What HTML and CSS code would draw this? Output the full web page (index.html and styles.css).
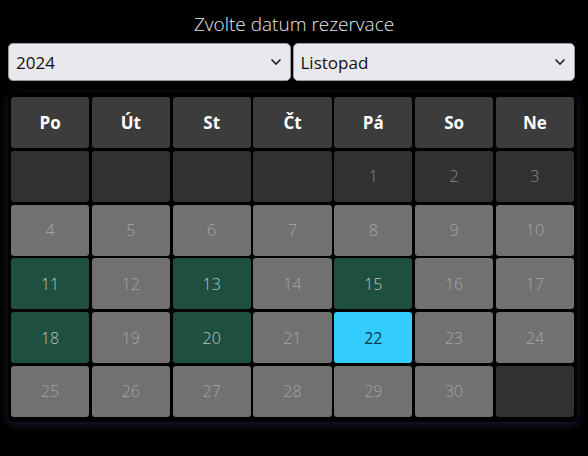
FILE: index.html
```html
<!DOCTYPE html>
<html>
  <head>
    <title>Rezervace</title>
    <link rel="stylesheet" href="styles.css">
  </head>
  <body>
    <h1 class="title">Zvolte datum rezervace</h1>
    <div class="pickers">
      <select id="year" class="picker">
        <option>2024</option>
      </select>
      <select id="month" class="picker">
        <option>Listopad</option>
      </select>
    </div>

    <div class="calendar">
      <div class="cell head">Po</div>
      <div class="cell head">Út</div>
      <div class="cell head">St</div>
      <div class="cell head">Čt</div>
      <div class="cell head">Pá</div>
      <div class="cell head">So</div>
      <div class="cell head">Ne</div>

      <div class="cell empty"></div>
      <div class="cell empty"></div>
      <div class="cell empty"></div>
      <div class="cell empty"></div>
      <div class="cell empty">1</div>
      <div class="cell empty">2</div>
      <div class="cell empty">3</div>

      <div class="cell day">4</div>
      <div class="cell day">5</div>
      <div class="cell day">6</div>
      <div class="cell day">7</div>
      <div class="cell day">8</div>
      <div class="cell day">9</div>
      <div class="cell day">10</div>

      <div class="cell day free">11</div>
      <div class="cell day">12</div>
      <div class="cell day free">13</div>
      <div class="cell day">14</div>
      <div class="cell day free">15</div>
      <div class="cell day">16</div>
      <div class="cell day">17</div>

      <div class="cell day free">18</div>
      <div class="cell day">19</div>
      <div class="cell day free">20</div>
      <div class="cell day">21</div>
      <div class="cell day selected">22</div>
      <div class="cell day">23</div>
      <div class="cell day">24</div>

      <div class="cell day">25</div>
      <div class="cell day">26</div>
      <div class="cell day">27</div>
      <div class="cell day">28</div>
      <div class="cell day">29</div>
      <div class="cell day">30</div>
      <div class="cell empty"></div>
    </div>
  </body>
</html>
```

FILE: styles.css
```css
/* Rezervace - kalendar */
body {
  font-family: "Open Sans", "Noto Sans", sans-serif;
  margin: 0;
  padding: 8px;
  background-color: #000;
  color: #e4e4e4;
}

.title {
  margin: 3px 0 6px;
  font-size: 19px;
  font-weight: 300;
  text-align: center;
  line-height: 26px;
  color: #e6e6e6;
}

.pickers {
  display: grid;
  grid-template-columns: 1fr 1fr;
  gap: 2px;
  width: 567px;
}

.picker {
  height: 38px;
  padding: 0 7px;
  font-family: "Open Sans", sans-serif;
  font-size: 17px;
  color: #111;
  background-color: #e9e8ed;
  border: 1px solid #9a99a2;
  border-radius: 5px;
  appearance: none;
  background-image: url("data:image/svg+xml;utf8,<svg xmlns='http://www.w3.org/2000/svg' width='12' height='8' viewBox='0 0 12 8'><path d='M1.5 1.5 L6 6 L10.5 1.5' fill='none' stroke='%23222' stroke-width='1.6'/></svg>");
  background-repeat: no-repeat;
  background-position: right 8px center;
}

.calendar {
  display: grid;
  grid-template-columns: repeat(7, 1fr);
  grid-auto-rows: 51px;
  gap: 2.8px 2.7px;
  width: 563px;
  margin-top: 11px;
  padding: 5px 3px 5px 3px;
  background-color: #000;
  border-radius: 6px;
  box-shadow: 0 3px 10px 1px rgba(28, 32, 55, 0.7);
}

.cell {
  display: flex;
  align-items: center;
  justify-content: center;
  border-radius: 3px;
  font-size: 16px;
  font-weight: 300;
}

.head {
  background-color: #3c3c3c;
  color: #fff;
  font-weight: 700;
  font-size: 17px;
}

.empty {
  background-color: #313131;
  color: #8a8a8a;
}

.day {
  background-color: #717171;
  color: #a6a6a6;
}

.day.free {
  background-color: #1f4f3e;
  color: #b9c8c1;
}

.day.selected {
  background-color: #33ccff;
  color: #10384a;
  font-weight: 400;
}
```
